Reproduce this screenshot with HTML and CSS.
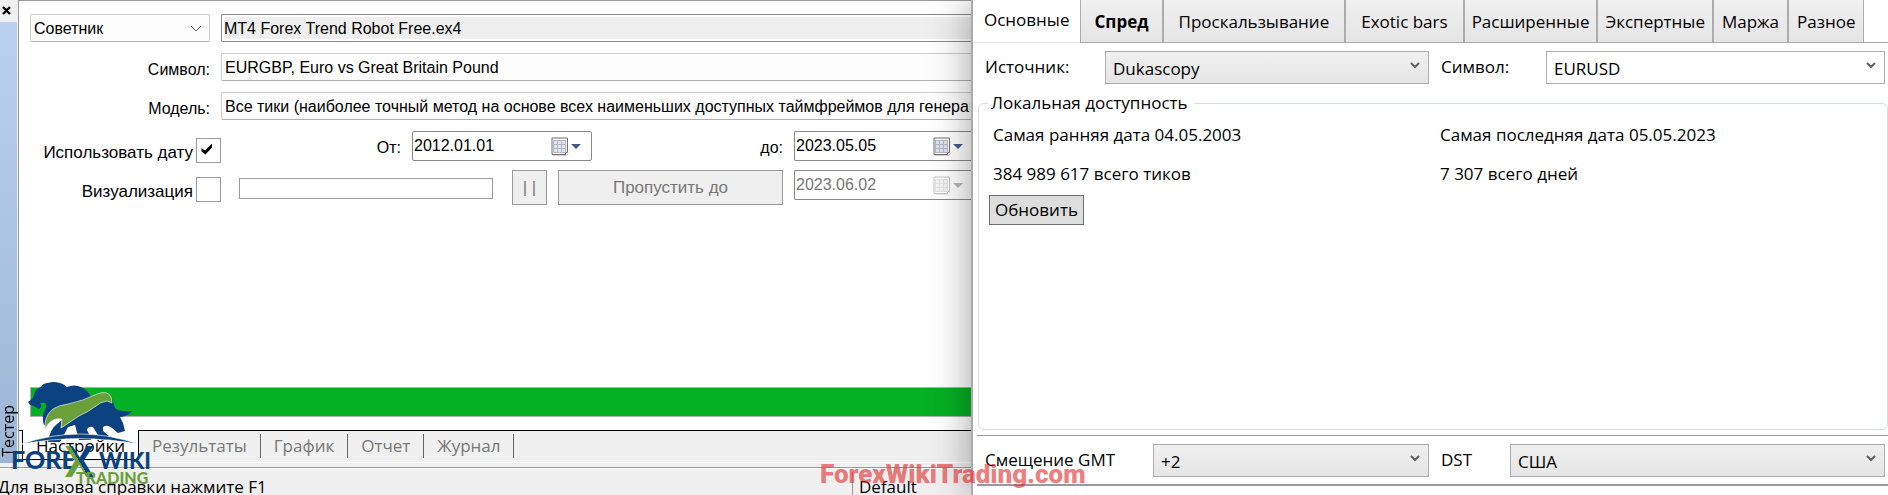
FILE: index.html
```html
<!DOCTYPE html>
<html lang="ru">
<head>
    <meta charset="UTF-8">
    <meta name="viewport" content="width=device-width, initial-scale=1.0">
    <title>Тестер</title>
    <link rel="stylesheet" href="styles.css">
</head>
<body>

    <svg class="icon-defs">
        <symbol id="calendar" viewBox="0 0 18 19">
            <path d="M2 18.500H15.500L17.500 16" fill="none" stroke="#d8cfcf"/>
            <path d="M1 1H16.500V15.500H14.500V17.500H1Z" fill="#fff" stroke="#776c6c"/>
            <rect x="3" y="3" width="12" height="12" fill="#dfe3ee"/>
            <path d="M2.500 3V15.500M6.500 3V15.500M10.500 3V15.500M14.500 3V15.500M2.500 3.500H14.500M2.500 7.500H14.500M2.500 11.500H14.500M2.500 15.500H14.500" stroke="#b5b9c6" fill="none"/>
        </symbol>
    </svg>

    <div class="screen">
        <div class="terminal">
            <div class="workspace">
                <div class="side">
                    <button class="close" aria-label="Закрыть">
                        <svg width="9" height="9" viewBox="0 0 9 9"><path d="M1 1L8 8M8 1L1 8" stroke="#000" stroke-width="2.400"/></svg>
                    </button>
                    <div class="side-title"><span>Тестер</span></div>
                </div>

                <div class="tester">
                    <div class="settings">
                        <div class="row">
                            <select class="field kind" aria-label="Тип">
                                <option>Советник</option>
                            </select>
                            <select class="field wide file" aria-label="Файл">
                                <option>MT4 Forex Trend Robot Free.ex4</option>
                            </select>
                        </div>
                        <div class="row">
                            <label class="caption" for="symbol">Символ:</label>
                            <select class="field wide" id="symbol">
                                <option>EURGBP, Euro vs Great Britain Pound</option>
                            </select>
                        </div>
                        <div class="row">
                            <label class="caption" for="model">Модель:</label>
                            <select class="field wide" id="model">
                                <option>Все тики (наиболее точный метод на основе всех наименьших доступных таймфреймов для генерации каждого тика)</option>
                            </select>
                        </div>
                        <div class="row">
                            <div class="check">
                                <label for="use-date">Использовать дату</label>
                                <input type="checkbox" id="use-date" checked>
                            </div>
                            <label class="caption from" for="date-from">От:</label>
                            <div class="date">
                                <input type="text" id="date-from" value="2012.01.01">
                                <button class="pick" aria-label="Календарь"><svg class="cal"><use href="#calendar"/></svg></button>
                            </div>
                            <label class="caption till" for="date-till">до:</label>
                            <div class="date last">
                                <input type="text" id="date-till" value="2023.05.05">
                                <button class="pick" aria-label="Календарь"><svg class="cal"><use href="#calendar"/></svg></button>
                            </div>
                        </div>
                        <div class="row">
                            <div class="check">
                                <label for="visual">Визуализация</label>
                                <input type="checkbox" id="visual">
                            </div>
                            <input type="range" class="speed" aria-label="Скорость" disabled>
                            <button class="grey pause" disabled>| |</button>
                            <button class="grey skip" disabled>Пропустить до</button>
                            <div class="date last off">
                                <input type="text" value="2023.06.02" aria-label="Дата" disabled>
                                <button class="pick" aria-label="Календарь" disabled><svg class="cal"><use href="#calendar"/></svg></button>
                            </div>
                        </div>
                    </div>

                    <div class="progress"></div>

                    <div class="tabs">
                        <button class="tab active">Настройки</button>
                        <button class="tab">Результаты</button>
                        <button class="tab">График</button>
                        <button class="tab">Отчет</button>
                        <button class="tab">Журнал</button>
                    </div>
                </div>
            </div>

            <div class="status">
                <span class="hint">Для вызова справки нажмите F1</span>
                <span class="profile">Default</span>
            </div>
        </div>

        <div class="options">
            <div class="option-tabs">
                <button class="option-tab current">Основные</button>
                <button class="option-tab roomy bold">Спред</button>
                <button class="option-tab roomy">Проскальзывание</button>
                <button class="option-tab roomy">Exotic bars</button>
                <button class="option-tab">Расширенные</button>
                <button class="option-tab">Экспертные</button>
                <button class="option-tab short">Маржа</button>
                <button class="option-tab short">Разное</button>
            </div>

            <div class="pair source">
                <div class="item">
                    <label class="w-source" for="source">Источник:</label>
                    <div class="combo">
                        <select id="source"><option>Dukascopy</option></select>
                        <svg class="arrow" viewBox="0 0 10 7"><path d="M1 1L5 5L9 1" fill="none" stroke="#606060" stroke-width="2"/></svg>
                    </div>
                </div>
                <div class="item">
                    <label class="w-pair" for="pair">Символ:</label>
                    <div class="combo white">
                        <select id="pair"><option>EURUSD</option></select>
                        <svg class="arrow" viewBox="0 0 10 7"><path d="M1 1L5 5L9 1" fill="none" stroke="#606060" stroke-width="2"/></svg>
                    </div>
                </div>
            </div>

            <fieldset class="local">
                <legend>Локальная доступность</legend>
                <div class="facts">
                    <span>Самая ранняя дата 04.05.2003</span>
                    <span>Самая последняя дата 05.05.2023</span>
                    <span>384 989 617 всего тиков</span>
                    <span>7 307 всего дней</span>
                </div>
                <button class="refresh">Обновить</button>
            </fieldset>

            <div class="pair shift">
                <div class="item">
                    <label class="w-gmt" for="gmt">Смещение GMT</label>
                    <div class="combo">
                        <select id="gmt"><option>+2</option></select>
                        <svg class="arrow" viewBox="0 0 10 7"><path d="M1 1L5 5L9 1" fill="none" stroke="#606060" stroke-width="2"/></svg>
                    </div>
                </div>
                <div class="item">
                    <label class="w-dst" for="dst">DST</label>
                    <div class="combo">
                        <select id="dst"><option>США</option></select>
                        <svg class="arrow" viewBox="0 0 10 7"><path d="M1 1L5 5L9 1" fill="none" stroke="#606060" stroke-width="2"/></svg>
                    </div>
                </div>
            </div>
        </div>

        <svg class="logo" width="156" height="108" viewBox="0 0 156 108">
            <defs>
                <linearGradient id="cross" x1="0" y1="1" x2="1" y2="0">
                    <stop offset="0.500" stop-color="#6a9f3a"/>
                    <stop offset="0.500" stop-color="#0a4180"/>
                </linearGradient>
            </defs>
            <!-- медведь -->
            <path fill="#0a4180" d="M28 20L33 16L35 10Q37 6 41 5Q43 1 48 1Q53 -1 60 1Q64 2 67 5Q74 2 81 5Q88 8 91 15L80 20L66 24L57 27Q50 33 47 44Q43 44 43 38Q42 31 46 26Q47 22 45 21Q41 20 40 22Q43 24 39 27Q36 26 34 24L30 23Z"/>
            <!-- бык -->
            <path fill="#0a4180" d="M61 46L78 34L90 28L101 21L112 17L115 26Q119 30 132 29Q129 34 120 35L123 41L125 49L118 51L112 46Q107 42 103 45V49L109 54L108 58H101L93 45Q88 44 87 48L90 54L91 58H79L75 43L68 45L63 55L60 60H48Q50 47 57 42L62 38Z"/>
            <path fill="#6a9f3a" stroke="#fff" stroke-width="0.600" d="M45 47Q44 34 53 27Q59 23 68 22Q83 19 97 12Q108 8 111 15L112 21L107 19Q100 20 96 24Q88 30 79 34L61 46L62 37Q51 35 45 47Z"/>
            <path fill="#0a4180" stroke="#fff" stroke-width="0.600" d="M22 62Q80 42 138 62Q80 51 22 62Z"/>
            <text class="logo-main" x="11" y="87" font-size="25">FORE</text>
            <text class="logo-main" x="65" y="95" font-size="42" style="fill: url(#cross)">X</text>
            <text class="logo-main" x="99" y="87" font-size="22">WIKI</text>
            <text class="logo-sub" x="76" y="102" font-size="16">TRADING</text>
        </svg>
        <div class="watermark">ForexWikiTrading.com</div>
    </div>

</body>
</html>
```
FILE: styles.css
```css
* {
    box-sizing: border-box;
}

body {
    margin: 0;
    font-family: "Open Sans", "Noto Sans", sans-serif;
    font-size: 17px;
    color: #000;
    background-color: #fff;
}

button, input, select {
    font: inherit;
    color: inherit;
    margin: 0;
    border-radius: 0;
}

.icon-defs {
    display: none;
}

.screen {
    display: grid;
    grid-template-columns: 973fr 915fr;
    height: 100vh;
    position: relative;
    overflow: hidden;
}

/* Терминал */
.terminal {
    display: flex;
    flex-direction: column;
    min-width: 0;
    overflow: hidden;
    background-color: #f0f0f0;
}

.workspace {
    display: flex;
    flex: 1;
    min-height: 0;
    border-bottom: 1px solid #999;
    padding-bottom: 4px;
}

.side {
    display: flex;
    flex-direction: column;
    width: 18px;
}

.close {
    height: 22px;
    padding: 0 0 6px 2px;
    border: none;
    background: none;
    text-align: left;
    line-height: 1;
}

.side-title {
    flex: 1;
    display: flex;
    align-items: flex-end;
    width: 17px;
    padding-bottom: 6px;
    background: linear-gradient(#b9d1ee, #9db6d5);
}

.side-title span {
    writing-mode: vertical-rl;
    transform: rotate(180deg);
    line-height: 17px;
    font-size: 16px;
}

.tester {
    flex: 1;
    min-width: 0;
    display: flex;
    flex-direction: column;
    background-color: #fff;
    border-top: 1px solid #999;
    border-left: 1px solid #999;
}

.settings {
    flex: 1;
    padding: 13px 0 0 11px;
    font-family: "Liberation Sans", Arial, sans-serif;
    font-size: 16px;
}

.row {
    display: flex;
    height: 39px;
    align-items: flex-start;
}

.caption {
    width: 191px;
    padding-right: 11px;
    line-height: 34px;
    text-align: right;
}

.till {
    width: 202px;
}

.field {
    appearance: none;
    height: 28px;
    padding: 0 3px;
    border: 1px solid #ccc;
    border-bottom-color: #b0b0b0;
    border-radius: 2px;
    background-color: #fdfdfd;
}

.kind {
    width: 180px;
    margin-right: 11px;
    background: #fdfdfd url("data:image/svg+xml,%3Csvg xmlns='http://www.w3.org/2000/svg' width='12' height='7'%3E%3Cpath d='M1 1L6 6L11 1' fill='none' stroke='%23555'/%3E%3C/svg%3E") no-repeat right 7px center;
}

.wide {
    flex: 1;
    min-width: 0;
    border-right: none;
    border-radius: 2px 0 0 2px;
}

.file {
    padding: 0 2px;
    border-color: #888;
    background-color: #efefef;
    box-shadow: inset 0 0 0 2px #fff;
}

.check {
    display: flex;
    justify-content: flex-end;
    width: 191px;
    padding-top: 7px;
    font-size: 17px;
    line-height: 30px;
}

.check input {
    appearance: none;
    width: 25px;
    height: 25px;
    margin-left: 3px;
    border: 1px solid #999;
    background-color: #fff;
}

.check input:checked {
    background: #fff url("data:image/svg+xml,%3Csvg xmlns='http://www.w3.org/2000/svg' width='12' height='12'%3E%3Cpath d='M0.500 5L4 7.500L11 0.500V4.500L4.500 11.500L0.500 8.500Z'/%3E%3C/svg%3E") no-repeat 4px 4px;
}

.date {
    display: flex;
    width: 180px;
    height: 30px;
    border: 1px solid #888;
    border-radius: 2px;
    background-color: #fff;
}

.last {
    flex: 1;
    border-right: none;
    border-radius: 2px 0 0 2px;
}

.date input {
    width: 138px;
    padding: 0 1px;
    border: none;
    background: none;
}

.pick {
    display: flex;
    align-items: center;
    gap: 2px;
    padding: 0;
    border: none;
    background: none;
}

.pick::after {
    content: "";
    border: 5px solid transparent;
    border-top-color: #46598a;
    border-bottom: none;
}

.cal {
    width: 18px;
    height: 19px;
}

.off {
    color: #777;
}

.off .pick {
    filter: grayscale(1);
    opacity: 0.400;
}

.speed {
    appearance: none;
    width: 254px;
    height: 21px;
    margin: 8px 19px 0 18px;
    border: 1px solid #999;
    background-color: #fff;
}

.speed::-webkit-slider-thumb {
    appearance: none;
    width: 0;
}

.grey {
    height: 35px;
    margin-right: 11px;
    padding: 0;
    border: 1px solid #999;
    background-color: #efefef;
    color: #777;
    font-size: 17px;
}

.pause {
    width: 35px;
}

.skip {
    width: 225px;
}

.progress {
    height: 30px;
    margin: 0 0 13px 11px;
    border: 1px solid #b0b0b0;
    border-right: none;
    background-color: #06b025;
}

.tabs {
    display: flex;
    height: 33px;
    padding-left: 3px;
    border-bottom: 1px solid #fff;
    background: linear-gradient(#000, #000) no-repeat top / 100% 1px #f0f0f0;
}

.tab {
    height: 24px;
    margin-top: 4px;
    padding: 0 13px;
    border: none;
    border-right: 1px solid #666;
    background: none;
    color: #777;
    line-height: 22px;
}

.tab.active {
    width: 117px;
    height: 30px;
    margin-top: 0;
    padding: 3px 0 0;
    border: 1px solid #000;
    border-top: none;
    background-color: #fff;
    color: #000;
}

.status {
    display: flex;
    height: 27px;
    border-top: 1px solid #fff;
    line-height: 36px;
    overflow: hidden;
}

.hint {
    width: 852px;
    text-indent: -2px;
}

.profile {
    margin-top: 3px;
    padding-left: 6px;
    border-left: 1px solid #999;
    line-height: 30px;
}

/* Окно настроек данных */
.options {
    display: flex;
    flex-direction: column;
    min-width: 0;
    background-color: #fff;
    box-shadow: -1px 0 0 1px #aaa, 0 0 40px rgba(0, 0, 0, 0.400);
    z-index: 1;
}

.option-tabs {
    display: flex;
    height: 43px;
    background: linear-gradient(#aaa, #aaa) no-repeat bottom / 100% 1px;
}

.option-tab {
    padding: 0 7px;
    border: 1px solid #acacac;
    border-width: 0 1px 1px;
    background: linear-gradient(#f0f0f0, #e5e5e5);
}

.short {
    padding: 0 8px;
}

.roomy {
    padding: 0 15px;
}

.bold {
    padding: 0 13px;
    font-weight: bold;
}

.current {
    padding: 0 11px 4px;
    border: none;
    border-bottom: 1px solid #e5e5e5;
    background: #fff;
}

.pair {
    display: grid;
    grid-template-columns: 1fr 1fr;
    gap: 12px;
    padding: 8px 3px 7px 12px;
}

.item {
    display: flex;
}

.item label {
    line-height: 31px;
}

.w-source {
    width: 120px;
}

.w-pair {
    width: 105px;
}

.w-gmt {
    width: 168px;
}

.w-dst {
    width: 69px;
}

.combo {
    flex: 1;
    position: relative;
}

.combo select {
    appearance: none;
    display: block;
    width: 100%;
    height: 33px;
    padding: 2px 7px 0;
    border: 1px solid #acacac;
    background: linear-gradient(#f0f0f0, #e5e5e5);
}

.white select {
    background: #fff;
}

.arrow {
    position: absolute;
    right: 9px;
    top: 11px;
    width: 10px;
    height: 7px;
}

.local {
    flex: 1;
    min-width: 0;
    margin: 0 0 5px 5px;
    padding: 0 0 0 10px;
    border: 1px solid #d5dfe5;
    border-radius: 6px;
}

.local legend {
    padding: 0 6px 0 3px;
    margin-left: -1px;
    line-height: 24px;
}

.facts {
    display: grid;
    grid-template-columns: 1fr 1fr;
    padding: 0 0 2px 4px;
    line-height: 39px;
}

.refresh {
    height: 30px;
    padding: 0 5px;
    border: 1px solid #707070;
    background-color: #ddd;
    line-height: 26px;
}

.shift {
    margin: 0 0 9px 4px;
    padding-left: 8px;
    border-top: 1px solid #999;
    border-bottom: 2px solid #999;
}

/* Логотип и подпись сайта */
.logo {
    position: absolute;
    left: 0;
    bottom: 5px;
    z-index: 2;
}

.logo-main {
    font-family: Lato, sans-serif;
    font-weight: 900;
    fill: #0a4180;
}

.logo-sub {
    font-family: Lato, sans-serif;
    font-weight: 900;
    fill: #6a9f3a;
}

.watermark {
    position: absolute;
    left: 820px;
    bottom: 3px;
    z-index: 2;
    color: rgba(224, 40, 40, 0.620);
    font-family: Impact, "Liberation Sans Narrow", Roboto, sans-serif;
    font-size: 26px;
    font-weight: 900;
    line-height: 36px;
}
```
